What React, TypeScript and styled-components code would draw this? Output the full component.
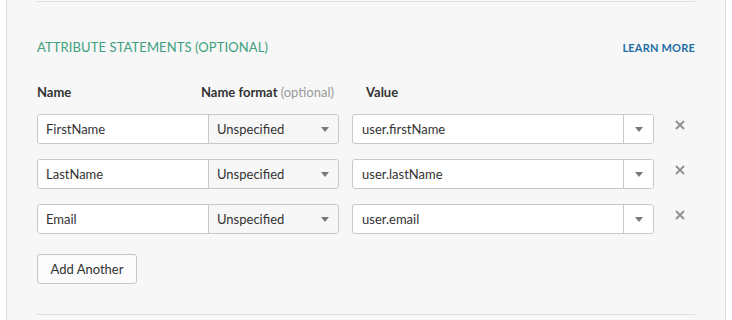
import styled, { createGlobalStyle } from "styled-components";

const GlobalStyle = createGlobalStyle`
  html, body {
    margin: 0;
    padding: 0;
    background: #ffffff;
  }
  body {
    font-family: Lato, "Open Sans", "Liberation Sans", sans-serif;
    color: #333;
  }
`;

const rows = [
  { name: "FirstName", format: "Unspecified", value: "user.firstName" },
  { name: "LastName", format: "Unspecified", value: "user.lastName" },
  { name: "Email", format: "Unspecified", value: "user.email" },
];

const Arrow = () => (
  <svg width="8" height="5" viewBox="0 0 8 5">
    <path d="M0 0 H8 L4 5 Z" fill="#7a7a7a" />
  </svg>
);

const CloseIcon = () => (
  <svg width="10" height="10" viewBox="0 0 10 10">
    <path d="M1 1 L9 9 M9 1 L1 9" stroke="#8f8f8f" strokeWidth="1.8" />
  </svg>
);

const App = () => {
  return (
    <Page>
      <GlobalStyle />
      <Panel>
        <Divider />
        <SectionHead>
          <Title>ATTRIBUTE STATEMENTS (OPTIONAL)</Title>
          <LearnMore href="#">LEARN MORE</LearnMore>
        </SectionHead>
        <ColumnHeads>
          <HeadCell>Name</HeadCell>
          <HeadCell $offset={-8}>
            Name format <Optional>(optional)</Optional>
          </HeadCell>
          <HeadCell $offset={14}>Value</HeadCell>
        </ColumnHeads>
        <Rows>
          {rows.map((r) => (
            <Row key={r.name}>
              <NameGroup>
                <NameInput>{r.name}</NameInput>
                <FormatSelect>
                  <span>{r.format}</span>
                  <Arrow />
                </FormatSelect>
              </NameGroup>
              <ValueCombo>
                <ValueText>{r.value}</ValueText>
                <ComboButton>
                  <Arrow />
                </ComboButton>
              </ValueCombo>
              <RemoveButton>
                <CloseIcon />
              </RemoveButton>
            </Row>
          ))}
        </Rows>
        <AddButton>Add Another</AddButton>
        <BottomDivider />
      </Panel>
    </Page>
  );
};

const Page = styled.div`
  width: 732px;
  height: 320px;
  overflow: hidden;
  padding-left: 6px;
  box-sizing: border-box;
`;

const Panel = styled.div`
  width: 720px;
  height: 320px;
  box-sizing: border-box;
  background: #f7f7f7;
  border-left: 1px solid #dcdcdc;
  border-right: 1px solid #dcdcdc;
  padding: 1px 30px 0 30px;
  display: flex;
  flex-direction: column;
`;

const Divider = styled.div`
  border-top: 1px solid #dedede;
`;

const BottomDivider = styled.div`
  border-top: 1px solid #dedede;
  margin-top: 30px;
`;

const SectionHead = styled.div`
  display: flex;
  justify-content: space-between;
  align-items: center;
  margin-top: 36px;
  height: 18px;
`;

const Title = styled.h2`
  margin: 0;
  font-size: 13px;
  font-weight: 400;
  color: #3d9f7d;
  letter-spacing: 0.1px;
`;

const LearnMore = styled.a`
  font-size: 11px;
  font-weight: 700;
  color: #1f6ea6;
  text-decoration: none;
  letter-spacing: 0.2px;
`;

const ColumnHeads = styled.div`
  display: grid;
  grid-template-columns: 172px 143px 1fr;
  margin-top: 28px;
  height: 16px;
  align-items: center;
`;

const HeadCell = styled.div<{ $offset?: number }>`
  font-size: 13px;
  font-weight: 700;
  color: #333;
  margin-left: ${(p) => p.$offset ?? 0}px;
`;

const Optional = styled.span`
  font-weight: 400;
  color: #999;
`;

const Rows = styled.div`
  display: flex;
  flex-direction: column;
  gap: 15px;
  margin-top: 14px;
`;

const Row = styled.div`
  display: flex;
  align-items: flex-start;
`;

const NameGroup = styled.div`
  display: flex;
  height: 30px;
  box-sizing: border-box;
  border: 1px solid #c8c8c8;
  border-radius: 3px;
  overflow: hidden;
  width: 302px;
`;

const NameInput = styled.div`
  width: 171px;
  background: #fff;
  border-right: 1px solid #c8c8c8;
  padding-left: 8px;
  box-sizing: border-box;
  font-size: 13px;
  line-height: 28px;
  color: #333;
`;

const FormatSelect = styled.div`
  flex: 1;
  display: flex;
  align-items: center;
  justify-content: space-between;
  padding: 0 9px 0 8px;
  background: #f7f7f7;
  font-size: 13px;
  color: #333;
`;

const ValueCombo = styled.div`
  display: flex;
  margin-left: 13px;
  width: 302px;
  height: 30px;
  box-sizing: border-box;
  border: 1px solid #c8c8c8;
  border-radius: 3px;
  background: #fff;
  overflow: hidden;
`;

const ValueText = styled.div`
  flex: 1;
  padding-left: 9px;
  font-size: 13px;
  line-height: 28px;
  color: #333;
`;

const ComboButton = styled.div`
  width: 29px;
  border-left: 1px solid #c8c8c8;
  display: flex;
  align-items: center;
  justify-content: center;
  background: #fff;
`;

const RemoveButton = styled.div`
  margin-left: 21px;
  margin-top: 6px;
  width: 10px;
  height: 10px;
  display: flex;
`;

const AddButton = styled.button`
  margin-top: 20px;
  align-self: flex-start;
  width: 100px;
  height: 30px;
  border: 1px solid #c6c6c6;
  border-radius: 3px;
  background: #fbfbfb;
  font-family: Lato, "Open Sans", "Liberation Sans", sans-serif;
  font-size: 13px;
  color: #333;
  padding: 0;
`;

App.displayName = "App";

export default App;
